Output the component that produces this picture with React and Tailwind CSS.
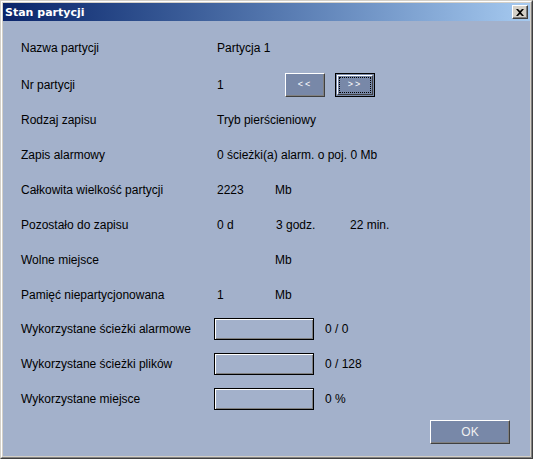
const raised = "border border-t-white border-l-white border-r-[#404040] border-b-[#404040] shadow-[inset_-1px_-1px_0_#808080]";

const Row = ({ label, children, className = "" }) => (
    <div className={`flex items-center h-[35px] ${className}`}>
        <div className="w-[196px] shrink-0">{label}</div>
        <div className="flex items-center">{children}</div>
    </div>
);

const Bar = () => (
    <div className="w-[100px] h-[22px] -ml-[3px] border border-black bg-[#a3b1cb] shadow-[inset_1px_1px_0_#ffffff,inset_-1px_-1px_0_#808080]"></div>
);

const App = () => {
    return (
        <div className="w-[533px] h-[459px] bg-[#d4d0c8] border border-t-[#d4d0c8] border-l-[#d4d0c8] border-r-[#404040] border-b-[#404040] overflow-hidden" style={{ fontFamily: '"Liberation Sans", Arial, sans-serif' }}>
            <div className="w-full h-full border border-t-white border-l-white border-r-[#808080] border-b-[#808080] p-px flex flex-col">
                <div className="h-[18px] flex items-center justify-between pl-[2px] pr-[2px] bg-gradient-to-r from-[#0a246a] to-[#a6caf0]">
                    <span className="text-white font-bold leading-none" style={{ fontFamily: '"DejaVu Sans", Tahoma, sans-serif', fontSize: '11px' }}>Stan partycji</span>
                    <div className={`w-[16px] h-[14px] bg-[#d4d0c8] flex items-center justify-center ${raised}`}>
                        <svg width="8" height="7" viewBox="0 0 8 7">
                            <path d="M0 0 L2 0 L4 2 L6 0 L8 0 L5 3.5 L8 7 L6 7 L4 5 L2 7 L0 7 L3 3.5 Z" fill="#000" />
                        </svg>
                    </div>
                </div>
                <div className="flex-1 bg-[#a3b1cb] text-[12px] text-black pl-[18px] pt-[9px] flex flex-col">
                    <Row label="Nazwa partycji">Partycja 1</Row>
                    <Row label="Nr partycji" className="mt-[2px]">
                        <span className="w-[68px]">1</span>
                        <button className={`w-[40px] h-[24px] bg-[#7888a8] text-white text-[9px] tracking-[2px] ${raised}`}>&lt;&lt;</button>
                        <button className={`ml-[10px] w-[40px] h-[24px] bg-[#7888a8] text-white text-[9px] tracking-[2px] border border-black p-px`}>
                            <div className="w-full h-full border border-t-white border-l-white border-r-[#404040] border-b-[#404040] flex items-center justify-center">
                                <div className="w-[32px] h-[16px] border border-dotted border-black flex items-center justify-center">&gt;&gt;</div>
                            </div>
                        </button>
                    </Row>
                    <Row label="Rodzaj zapisu">Tryb pierścieniowy</Row>
                    <Row label="Zapis alarmowy">0 ścieżki(a) alarm. o poj. 0 Mb</Row>
                    <Row label="Całkowita wielkość partycji">
                        <span className="w-[58px]">2223</span><span>Mb</span>
                    </Row>
                    <Row label="Pozostało do zapisu">
                        <span className="w-[59px]">0 d</span><span className="w-[74px]">3 godz.</span><span>22 min.</span>
                    </Row>
                    <Row label="Wolne miejsce">
                        <span className="w-[58px]"></span><span>Mb</span>
                    </Row>
                    <Row label="Pamięć niepartycjonowana">
                        <span className="w-[58px]">1</span><span>Mb</span>
                    </Row>
                    <Row label="Wykorzystane ścieżki alarmowe" className="-mt-px">
                        <Bar /><span className="ml-[11px]">0 / 0</span>
                    </Row>
                    <Row label="Wykorzystane ścieżki plików">
                        <Bar /><span className="ml-[11px]">0 / 128</span>
                    </Row>
                    <Row label="Wykorzystane miejsce">
                        <Bar /><span className="ml-[11px]">0 %</span>
                    </Row>
                    <div className="flex justify-end pr-[20px] mt-[4px]">
                        <button className={`w-[80px] h-[24px] bg-[#7888a8] text-[#f0f0f0] text-[12px] ${raised}`}>OK</button>
                    </div>
                </div>
            </div>
        </div>
    );
};

export default App;
